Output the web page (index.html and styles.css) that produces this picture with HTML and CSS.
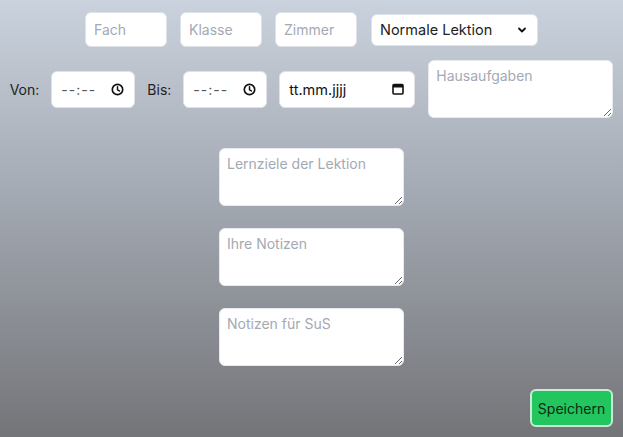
FILE: index.html
```html
<!DOCTYPE html>
<html lang="de">
<head>
<meta charset="utf-8">
<link rel="stylesheet" href="styles.css">
</head>
<body>
<main class="page">
  <div class="row row-top">
    <input class="field small" type="text" placeholder="Fach">
    <input class="field small" type="text" placeholder="Klasse">
    <input class="field small" type="text" placeholder="Zimmer">
    <div class="select-wrap">
      <select class="field select">
        <option>Normale Lektion</option>
      </select>
      <svg class="chev" width="10" height="10" viewBox="0 0 10 10"><path d="M2 3.5 L5 6.5 L8 3.5" fill="none" stroke="#111" stroke-width="1.8" stroke-linecap="round" stroke-linejoin="round"/></svg>
    </div>
  </div>
  <div class="row row-mid">
    <span class="label">Von:</span>
    <div class="field fake time"><span class="dim">--:--</span>
      <svg width="13" height="13" viewBox="0 0 14 14"><circle cx="7" cy="7" r="5.6" fill="none" stroke="#111" stroke-width="1.8"/><path d="M7 4 V7.3 L9 8.6" fill="none" stroke="#111" stroke-width="1.6" stroke-linecap="round"/></svg>
    </div>
    <span class="label">Bis:</span>
    <div class="field fake time"><span class="dim">--:--</span>
      <svg width="13" height="13" viewBox="0 0 14 14"><circle cx="7" cy="7" r="5.6" fill="none" stroke="#111" stroke-width="1.8"/><path d="M7 4 V7.3 L9 8.6" fill="none" stroke="#111" stroke-width="1.6" stroke-linecap="round"/></svg>
    </div>
    <div class="field fake date"><span>tt.mm.jjjj</span>
      <svg width="12" height="12" viewBox="0 0 12 12"><rect x="1" y="1.5" width="10" height="9.5" rx="1" fill="none" stroke="#111" stroke-width="1.6"/><rect x="1" y="1.5" width="10" height="3" fill="#111"/></svg>
    </div>
    <textarea class="field area" placeholder="Hausaufgaben"></textarea>
  </div>
  <div class="column">
    <textarea class="field area" placeholder="Lernziele der Lektion"></textarea>
    <textarea class="field area" placeholder="Ihre Notizen"></textarea>
    <textarea class="field area" placeholder="Notizen für SuS"></textarea>
  </div>
  <div class="actions">
    <button class="save">Speichern</button>
  </div>
</main>
</body>
</html>
```
FILE: styles.css
```css
html, body {
  margin: 0;
  padding: 0;
  height: 100%;
}
body {
  background: linear-gradient(180deg, #cad2dd 0%, #a3a9b2 45%, #737478 100%);
  font-family: Inter, "Noto Sans", sans-serif;
  font-size: 14px;
  color: #111;
}
.page {
  display: flex;
  flex-direction: column;
  height: 437px;
  box-sizing: border-box;
  padding-top: 12px;
}
.row {
  display: flex;
  justify-content: center;
  align-items: center;
}
.row-top {
  gap: 13px;
  height: 35px;
}
.field {
  box-sizing: border-box;
  border: 1px solid #dfe3e8;
  border-radius: 6px;
  background: #fff;
  font-family: Inter, "Noto Sans", sans-serif;
  font-size: 14px;
  color: #111;
  outline: none;
}
.field::placeholder {
  color: #a4a9b2;
}
.small {
  width: 82px;
  height: 35px;
  padding: 0 8px;
}
.select-wrap {
  position: relative;
  margin-left: 1px;
}
.select {
  appearance: none;
  -webkit-appearance: none;
  width: 167px;
  height: 32px;
  padding: 0 8px;
  font-size: 14.5px;
  color: #222;
}
.chev {
  position: absolute;
  right: 11px;
  top: 11px;
  pointer-events: none;
}
.row-mid {
  margin-top: 13px;
  gap: 12px;
}
.label {
  color: #222;
  font-size: 14px;
}
.fake {
  display: flex;
  align-items: center;
  justify-content: space-between;
  height: 37px;
}
.time {
  width: 84px;
  padding: 0 10px 0 9px;
}
.dim {
  color: #555;
  letter-spacing: 1px;
}
.date {
  width: 136px;
  padding: 0 10px 0 9px;
  font-size: 14.5px;
}
.area {
  width: 185px;
  height: 58px;
  padding: 6px 7px;
  resize: vertical;
  display: block;
  border: 1.5px solid #e7eaee;
}
.row-mid .area {
  margin-left: 1px;
}
.column {
  display: flex;
  flex-direction: column;
  align-items: center;
  gap: 22px;
  margin-top: 30px;
}
.actions {
  margin-top: auto;
  display: flex;
  justify-content: flex-end;
  padding: 0 10px 10px 0;
}
.save {
  width: 83px;
  height: 38px;
  background: #22c55e;
  border: 2px solid #c9ecd5;
  border-radius: 6px;
  font-family: Inter, "Noto Sans", sans-serif;
  font-size: 14px;
  color: #0b2a14;
  padding: 0;
}
```
